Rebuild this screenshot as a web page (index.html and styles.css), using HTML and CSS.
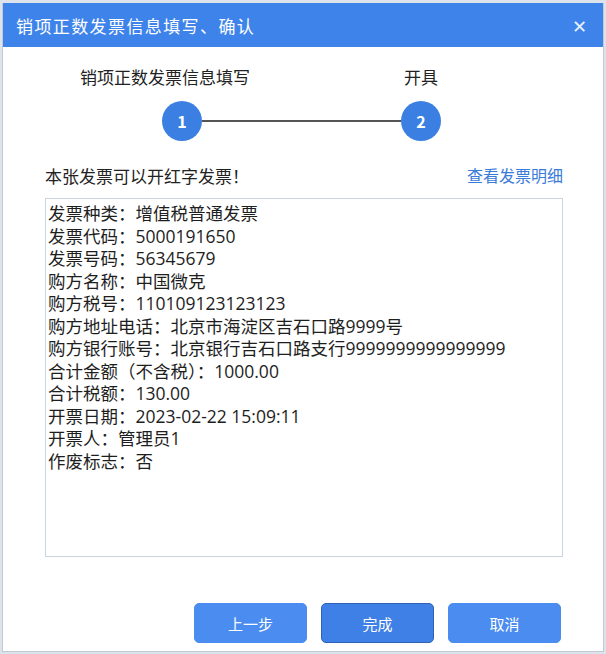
FILE: index.html
```html
<!DOCTYPE html>
<html lang="zh-CN">
<head>
    <meta charset="UTF-8">
    <meta name="viewport" content="width=device-width, initial-scale=1.0">
    <title>销项正数发票信息填写、确认</title>
    <link rel="stylesheet" href="styles.css">
</head>
<body>
    <div class="dialog">
        <div class="dialog-header">
            <span class="dialog-title">销项正数发票信息填写、确认</span>
            <span class="dialog-close">&#x2715;</span>
        </div>
        <div class="dialog-body">
            <div class="step-labels">
                <span class="step-label first">销项正数发票信息填写</span>
                <span class="step-label second">开具</span>
            </div>
            <div class="step-track">
                <div class="step-num">1</div>
                <div class="step-line"></div>
                <div class="step-num">2</div>
            </div>

            <div class="notice-row">
                <span>本张发票可以开红字发票！</span>
                <a class="detail-link" href="#">查看发票明细</a>
            </div>

            <div class="info-box">
                <div>发票种类：增值税普通发票</div>
                <div>发票代码：5000191650</div>
                <div>发票号码：56345679</div>
                <div>购方名称：中国微克</div>
                <div>购方税号：110109123123123</div>
                <div>购方地址电话：北京市海淀区吉石口路9999号</div>
                <div>购方银行账号：北京银行吉石口路支行9999999999999999</div>
                <div>合计金额（不含税）：1000.00</div>
                <div>合计税额：130.00</div>
                <div>开票日期：2023-02-22 15:09:11</div>
                <div>开票人：管理员1</div>
                <div>作废标志：否</div>
            </div>

            <div class="button-row">
                <button class="btn">上一步</button>
                <button class="btn btn-focus">完成</button>
                <button class="btn">取消</button>
            </div>
        </div>
    </div>
</body>
</html>
```

FILE: styles.css
```css
body {
    margin: 0;
    background-color: #dde3ea;
    font-family: "Noto Sans CJK SC", "Noto Sans", sans-serif;
    color: #222;
}

.dialog {
    margin: 3px 2px 0 2px;
    height: 648px;
    background-color: #fff;
    border: 1px solid #c3cad3;
    border-top: none;
}

.dialog-header {
    height: 44px;
    background-color: #3e83ea;
    display: flex;
    align-items: center;
    justify-content: space-between;
    padding: 0 16px 0 13px;
    color: #fff;
}

.dialog-title {
    font-size: 17px;
    letter-spacing: 1.4px;
}

.dialog-close {
    font-size: 18px;
    color: #e8f0fc;
}

.dialog-body {
    padding-left: 42px;
}

.step-labels {
    display: flex;
    margin-top: 18px;
    height: 24px;
    line-height: 24px;
    font-size: 17px;
}

.step-label.first {
    margin-left: 35px;
}

.step-label.second {
    margin-left: 154px;
}

.step-track {
    display: flex;
    align-items: center;
    margin-top: 12px;
    padding-left: 117px;
}

.step-num {
    width: 40px;
    height: 40px;
    border-radius: 50%;
    background-color: #3b7fe3;
    color: #fff;
    font-weight: bold;
    font-size: 16px;
    display: flex;
    align-items: center;
    justify-content: center;
}

.step-line {
    width: 199px;
    height: 2px;
    background-color: #555;
}

.notice-row {
    display: flex;
    justify-content: space-between;
    align-items: center;
    width: 518px;
    margin-top: 22px;
    height: 24px;
    font-size: 17px;
}

.detail-link {
    color: #3a7bd8;
    font-size: 16px;
    text-decoration: none;
}

.info-box {
    width: 512px;
    height: 351px;
    margin-top: 11px;
    padding: 3px 2px;
    border: 1px solid #c9d5e0;
    font-family: "Open Sans", "Noto Sans CJK SC", sans-serif;
    font-size: 17.5px;
    line-height: 22.5px;
    color: #1e1e1e;
}

.button-row {
    display: flex;
    justify-content: flex-end;
    gap: 14px;
    width: 516px;
    margin-top: 46px;
}

.btn {
    width: 113px;
    height: 40px;
    border: 1px solid #4a8cf0;
    border-radius: 5px;
    background-color: #4a8cf0;
    color: #fff;
    font-family: "Noto Sans CJK SC", sans-serif;
    font-size: 15px;
}

.btn-focus {
    border-color: #2d62b5;
    background-color: #3f80e6;
}
```
